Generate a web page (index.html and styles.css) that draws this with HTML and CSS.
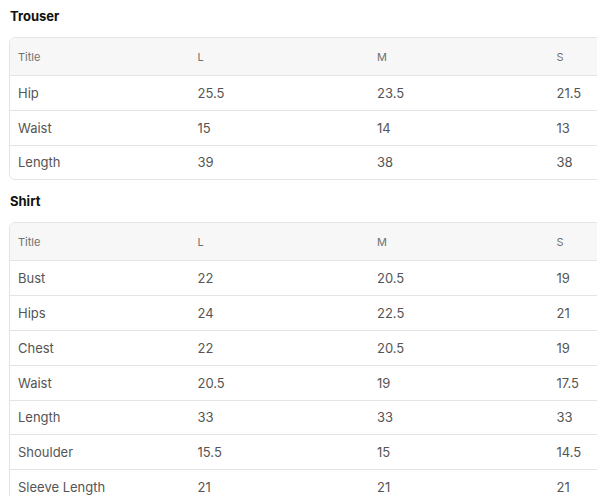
FILE: index.html
```html
<!DOCTYPE html>
<html>
<head>
<meta charset="utf-8">
<link rel="stylesheet" href="styles.css">
</head>
<body>
<main class="page">
  <section class="chart">
    <h3 class="chart-title">Trouser</h3>
    <div class="table-wrap">
      <table class="size-table">
        <thead>
          <tr><th>Title</th><th>L</th><th>M</th><th>S</th></tr>
        </thead>
        <tbody>
          <tr><td>Hip</td><td>25.5</td><td>23.5</td><td>21.5</td></tr>
          <tr><td>Waist</td><td>15</td><td>14</td><td>13</td></tr>
          <tr><td>Length</td><td>39</td><td>38</td><td>38</td></tr>
        </tbody>
      </table>
    </div>
  </section>
  <section class="chart">
    <h3 class="chart-title">Shirt</h3>
    <div class="table-wrap">
      <table class="size-table">
        <thead>
          <tr><th>Title</th><th>L</th><th>M</th><th>S</th></tr>
        </thead>
        <tbody>
          <tr><td>Bust</td><td>22</td><td>20.5</td><td>19</td></tr>
          <tr><td>Hips</td><td>24</td><td>22.5</td><td>21</td></tr>
          <tr><td>Chest</td><td>22</td><td>20.5</td><td>19</td></tr>
          <tr><td>Waist</td><td>20.5</td><td>19</td><td>17.5</td></tr>
          <tr><td>Length</td><td>33</td><td>33</td><td>33</td></tr>
          <tr><td>Shoulder</td><td>15.5</td><td>15</td><td>14.5</td></tr>
          <tr><td>Sleeve Length</td><td>21</td><td>21</td><td>21</td></tr>
        </tbody>
      </table>
    </div>
  </section>
</main>
</body>
</html>
```

FILE: styles.css
```css
html, body {
  margin: 0;
  padding: 0;
  background: #ffffff;
  overflow: hidden;
}
body {
  font-family: Inter, "Liberation Sans", sans-serif;
  color: #555555;
}
.page {
  padding: 8px 0 0 9px;
  display: flex;
  flex-direction: column;
  gap: 13px;
}
.chart {
  display: flex;
  flex-direction: column;
  gap: 13px;
}
.chart-title {
  margin: 0;
  padding-left: 1px;
  font-size: 13px;
  line-height: 16px;
  font-weight: 700;
  color: #111111;
}
.table-wrap {
  width: 720px;
  border: 1px solid #e4e4e4;
  border-radius: 6px;
  overflow: hidden;
}
.size-table {
  width: 718px;
  border-collapse: collapse;
  table-layout: fixed;
}
.size-table th,
.size-table td {
  text-align: left;
  padding: 0 8px;
  width: 25%;
  line-height: 16px;
}
.size-table th {
  height: 37px;
  background: #f7f7f7;
  font-size: 11px;
  font-weight: 400;
  color: #707070;
  border-bottom: 1px solid #e4e4e4;
}
.size-table td {
  height: 33.8px;
  font-size: 13px;
  color: #555555;
  border-bottom: 1px solid #e4e4e4;
}
.size-table tbody tr:last-child td {
  border-bottom: none;
}
```
